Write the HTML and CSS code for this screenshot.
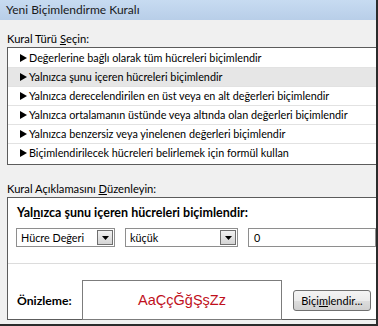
FILE: index.html
```html
<!DOCTYPE html>
<html lang="tr">
<head>
  <meta charset="UTF-8">
  <title>Yeni Biçimlendirme Kuralı</title>
  <link rel="stylesheet" href="styles.css">
</head>
<body>
  <div class="window">
    <div class="titlebar">Yeni Biçimlendirme Kuralı</div>

    <div class="dialog">
      <div class="label">Kural Türü <u>S</u>eçin:</div>
      <ul class="rule-list">
        <li><span class="arrow"></span>Değerlerine bağlı olarak tüm hücreleri biçimlendir</li>
        <li class="selected"><span class="arrow"></span>Yalnızca şunu içeren hücreleri biçimlendir</li>
        <li><span class="arrow"></span>Yalnızca derecelendirilen en üst veya en alt değerleri biçimlendir</li>
        <li><span class="arrow"></span>Yalnızca ortalamanın üstünde veya altında olan değerleri biçimlendir</li>
        <li><span class="arrow"></span>Yalnızca benzersiz veya yinelenen değerleri biçimlendir</li>
        <li><span class="arrow"></span>Biçimlendirilecek hücreleri belirlemek için formül kullan</li>
      </ul>

      <div class="label label-desc">Kural Açıklamasını <u>D</u>üzenleyin:</div>
      <div class="desc">
        <div class="desc-top">
          <div class="desc-title">Yal<u>n</u>ızca şunu içeren hücreleri biçimlendir:</div>
          <div class="controls">
            <div class="combo combo-field">
              <span>Hücre Değeri</span>
              <span class="drop"><svg width="7" height="4" viewBox="0 0 7 4"><path d="M0 0H7L3.5 4Z" fill="#000"/></svg></span>
            </div>
            <div class="combo combo-op">
              <span>küçük</span>
              <span class="drop"><svg width="7" height="4" viewBox="0 0 7 4"><path d="M0 0H7L3.5 4Z" fill="#000"/></svg></span>
            </div>
            <div class="textbox">0</div>
          </div>
        </div>

        <div class="preview-row">
          <div class="preview-label">Önizleme:</div>
          <div class="preview">AaÇçĞğŞşZz</div>
          <button class="format-btn">Biçi<u>m</u>lendir...</button>
        </div>
      </div>
    </div>
  </div>
</body>
</html>
```

FILE: styles.css
```css
/* Page */
body {
  margin: 0;
  font-family: Lato, "Liberation Sans", sans-serif;
  font-size: 10.8px;
  color: #000;
  background: #f0f0f0;
}

.window {
  width: 376px;
  height: 324px;
  overflow: hidden;
  background: #f0f0f0;
  border-right: 2px solid #2b2b2b;
  border-bottom: 2px solid #2b2b2b;
}

/* Title bar */
.titlebar {
  height: 20px;
  line-height: 20px;
  padding-left: 6px;
  font-size: 12px;
  background: linear-gradient(#c7dbf1, #b8cee8);
  color: #1a1a1a;
}

.dialog {
  padding-left: 7px;
}

.label {
  height: 16px;
  line-height: 16px;
  margin-top: 11px;
  font-size: 11.2px;
}

/* Rule type list */
.rule-list {
  list-style: none;
  margin: 0;
  padding: 1px 0 2px;
  background: #fff;
  border: 1px solid #5c5c5c;
  border-right: none;
}

.rule-list li {
  height: 18px;
  line-height: 18px;
  border-bottom: 1px solid #e2e2e2;
  padding-left: 12px;
  white-space: nowrap;
  display: flex;
  align-items: center;
}

.rule-list li:last-child {
  border-bottom: none;
}

.rule-list li.selected {
  background: #e6e6e6;
}

.arrow {
  width: 0;
  height: 0;
  border-top: 4px solid transparent;
  border-bottom: 4px solid transparent;
  border-left: 7px solid #000;
  margin-right: 2px;
}

.label-desc {
  margin-top: 16px;
}

/* Rule description */
.desc {
  background: #fff;
  border: 1px solid #5c5c5c;
  border-right: none;
  height: 121px;
}

.desc-top {
  padding: 7px 0 16px 8px;
  border-bottom: 1px solid #dcdcdc;
}

.desc-title {
  font-weight: bold;
  font-size: 12.5px;
  line-height: 16px;
  padding-left: 1px;
}

.controls {
  display: flex;
  gap: 10px;
  margin-top: 7px;
}

.combo,
.textbox {
  height: 17px;
  border: 1px solid #8e8e8e;
  display: flex;
  align-items: center;
  justify-content: space-between;
  padding: 0 1px 0 4px;
  background: #fff;
}

.combo-field {
  width: 92px;
}

.combo-op {
  width: 106px;
}

.textbox {
  flex: 1;
  padding-left: 5px;
}

.drop {
  width: 14px;
  height: 13px;
  border: 1px solid #6f6f6f;
  background: linear-gradient(#f2f2f2, #d4d4d4);
  display: flex;
  align-items: center;
  justify-content: center;
}

/* Preview */
.preview-row {
  display: flex;
  align-items: center;
  padding: 16px 0 0 9px;
}

.preview-label {
  font-weight: bold;
  font-size: 12.2px;
  width: 65px;
}

.preview {
  width: 198px;
  height: 38px;
  border: 1px solid #7c7c7c;
  display: flex;
  align-items: center;
  justify-content: center;
  color: #c0101c;
  font-family: "Liberation Sans", sans-serif;
  font-size: 14.5px;
}

.format-btn {
  margin-left: 11px;
  width: 78px;
  height: 21px;
  font-family: Lato, "Liberation Sans", sans-serif;
  font-size: 11px;
  padding: 0;
  border: 1px solid #707070;
  border-radius: 3px;
  background: linear-gradient(#f4f4f4 0%, #ebebeb 50%, #dddddd 51%, #cfcfcf 100%);
  color: #000;
}
```
